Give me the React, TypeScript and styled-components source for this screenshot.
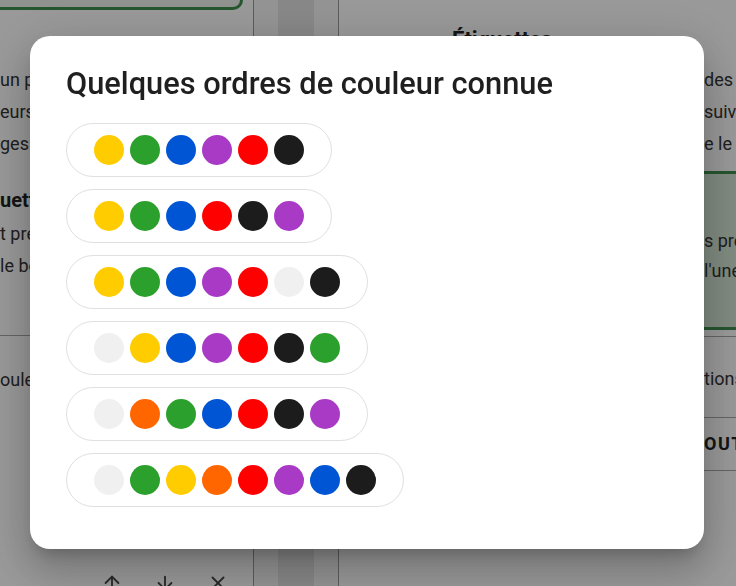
import React from 'react';
import styled, { createGlobalStyle } from 'styled-components';
import { ArrowUp, ArrowDown, X } from 'lucide-react';

const COLORS: Record<string, string> = {
  Y: '#FFCC00',
  G: '#2CA02C',
  B: '#0055D4',
  P: '#A83AC6',
  R: '#FF0000',
  K: '#1C1C1C',
  W: '#F0F0F0',
  O: '#FF6600',
};

// ordres connus, une lettre par couleur
const ORDRES = ['YGBPRK', 'YGBRKP', 'YGBPRWK', 'WYBPRKG', 'WOGBRKP', 'WGYORPBK'];

export default function App() {
  return (
    <>
      <GlobalStyle />
      <Page>
        <LeftPane>
          <TopCard />
          <Para $top={54}>
            <Line>un puzzle de couleurs</Line>
            <Line>eurs sont rangées</Line>
            <Line>ges du tableau</Line>
          </Para>
          <SubTitle>uettes</SubTitle>
          <Para $top={2}>
            <Line>t présentes dans</Line>
            <Line>le bon ordre</Line>
          </Para>
          <Divider $top={53} />
          <Line $top={28}>ouleurs</Line>
          <IconRow>
            <ArrowUp size={22} strokeWidth={2} />
            <ArrowDown size={22} strokeWidth={2} />
            <X size={22} strokeWidth={2} />
          </IconRow>
        </LeftPane>

        <Gutter>
          <Strip />
        </Gutter>

        <RightPane>
          <Heading>Étiquettes</Heading>
          <Para $top={8}>
            <SplitLine><Hidden>Chaque couleur correspond à l'une </Hidden><span>des étiquettes</span></SplitLine>
            <SplitLine><Hidden>Les couleurs sont placées dans l'ordre </Hidden><span>suivant</span></SplitLine>
            <SplitLine><Hidden>en commençant toujours par la gauch</Hidden><span>e le long</span></SplitLine>
          </Para>
          <GreenBox>
            <SplitLine><Hidden>Toutes les couleurs ne sont pa</Hidden><span>s présentes</span></SplitLine>
            <SplitLine><Hidden>dans chaque ordre, seulement </Hidden><span>l'une</span></SplitLine>
          </GreenBox>
          <Divider $top={6} />
          <SplitLine $top={26}><Hidden>Voir les ordres de couleur en op</Hidden><span>tions</span></SplitLine>
          <Divider $top={22} />
          <SplitLine $top={10}><Hidden>AJ</Hidden><Caps>OUTER</Caps></SplitLine>
          <Divider $top={10} />
        </RightPane>
      </Page>

      <Backdrop>
        <Dialog role="dialog">
          <Title>Quelques ordres de couleur connue</Title>
          <List>
            {ORDRES.map((ordre) => (
              <Pill key={ordre}>
                {ordre.split('').map((c, i) => (
                  <Dot key={i} $color={COLORS[c]} />
                ))}
              </Pill>
            ))}
          </List>
        </Dialog>
      </Backdrop>
    </>
  );
}

const GlobalStyle = createGlobalStyle`
  html, body {
    margin: 0;
    padding: 0;
    overflow: hidden;
  }
  body {
    font-family: Roboto, "Liberation Sans", sans-serif;
    color: #333;
  }
`;

const Page = styled.div`
  display: flex;
  width: 736px;
  height: 586px;
  overflow: hidden;
  background: #fff;
`;

const LeftPane = styled.div`
  display: flex;
  flex-direction: column;
  width: 253px;
  flex-shrink: 0;
  border-right: 1px solid #9a9a9a;
  overflow: hidden;

  & > * {
    flex-shrink: 0;
  }
`;

const TopCard = styled.div`
  box-sizing: border-box;
  width: 243px;
  height: 10px;
  background: #eef4ee;
  border-bottom: 3px solid #3f8f4f;
  border-right: 3px solid #3f8f4f;
  border-bottom-right-radius: 12px;
`;

const Para = styled.div<{ $top?: number }>`
  margin-top: ${({ $top }) => $top ?? 0}px;
`;

const Line = styled.div<{ $top?: number }>`
  margin-top: ${({ $top }) => $top ?? 0}px;
  font-size: 18px;
  line-height: 32px;
  white-space: nowrap;
  color: #333;
`;

const SubTitle = styled.div`
  margin-top: 24px;
  font-size: 20px;
  font-weight: 700;
  line-height: 32px;
  white-space: nowrap;
  color: #222;
`;

const Divider = styled.div<{ $top: number }>`
  margin-top: ${({ $top }) => $top}px;
  height: 0;
  border-top: 1px solid #a8a8a8;
`;

const IconRow = styled.div`
  display: flex;
  gap: 31px;
  padding-left: 101px;
  margin-top: 176px;
  color: #444;
`;

const Gutter = styled.div`
  width: 84px;
  flex-shrink: 0;
  background: #f6f6f6;
  border-right: 1px solid #9a9a9a;
  display: flex;
`;

const Strip = styled.div`
  margin-left: 24px;
  width: 36px;
  background: #e2e2e2;
`;

const RightPane = styled.div`
  flex: 1;
  display: flex;
  flex-direction: column;
  overflow: hidden;

  & > * {
    flex-shrink: 0;
  }
`;

const Heading = styled.div`
  margin-top: 24px;
  padding-left: 113px;
  font-size: 22px;
  font-weight: 700;
  line-height: 32px;
  color: #222;
  white-space: nowrap;
`;

const SplitLine = styled.div<{ $top?: number }>`
  display: grid;
  grid-template-columns: 365px max-content;
  margin-top: ${({ $top }) => $top ?? 0}px;
  font-size: 18px;
  line-height: 32px;
  white-space: nowrap;
  color: #333;
`;

const Hidden = styled.span`
  overflow: hidden;
  text-align: right;
  direction: rtl;
`;

const Caps = styled.span`
  font-weight: 700;
  letter-spacing: 1.5px;
  color: #222;
`;

const GreenBox = styled.div`
  margin-top: 11px;
  padding: 52px 0 41px;
  background: #d6e8d6;
  border-top: 3px solid #3f8f4f;
  border-bottom: 3px solid #3f8f4f;

  ${SplitLine} {
    line-height: 30px;
  }
`;

const Backdrop = styled.div`
  position: fixed;
  inset: 0;
  display: flex;
  align-items: flex-start;
  justify-content: center;
  padding: 36px 2px 0 0;
  background: rgba(0, 0, 0, 0.4);
`;

const Dialog = styled.div`
  box-sizing: border-box;
  width: 674px;
  padding: 25px 36px 42px;
  background: #fff;
  border-radius: 20px;
  box-shadow: 0 11px 15px -7px rgba(0, 0, 0, 0.2), 0 24px 38px 3px rgba(0, 0, 0, 0.14),
    0 9px 46px 8px rgba(0, 0, 0, 0.12);
`;

const Title = styled.h2`
  margin: 0 0 17px;
  font-family: Roboto, "Liberation Sans", sans-serif;
  font-size: 30.8px;
  font-weight: 500;
  line-height: 45px;
  color: #1f1f1f;
`;

const List = styled.div`
  display: flex;
  flex-direction: column;
  align-items: flex-start;
  gap: 12px;
`;

const Pill = styled.div`
  display: flex;
  gap: 6px;
  padding: 11px 27px;
  border: 1px solid #e0e0e0;
  border-radius: 27px;
`;

const Dot = styled.span<{ $color: string }>`
  width: 30px;
  height: 30px;
  border-radius: 50%;
  background: ${({ $color }) => $color};
`;
